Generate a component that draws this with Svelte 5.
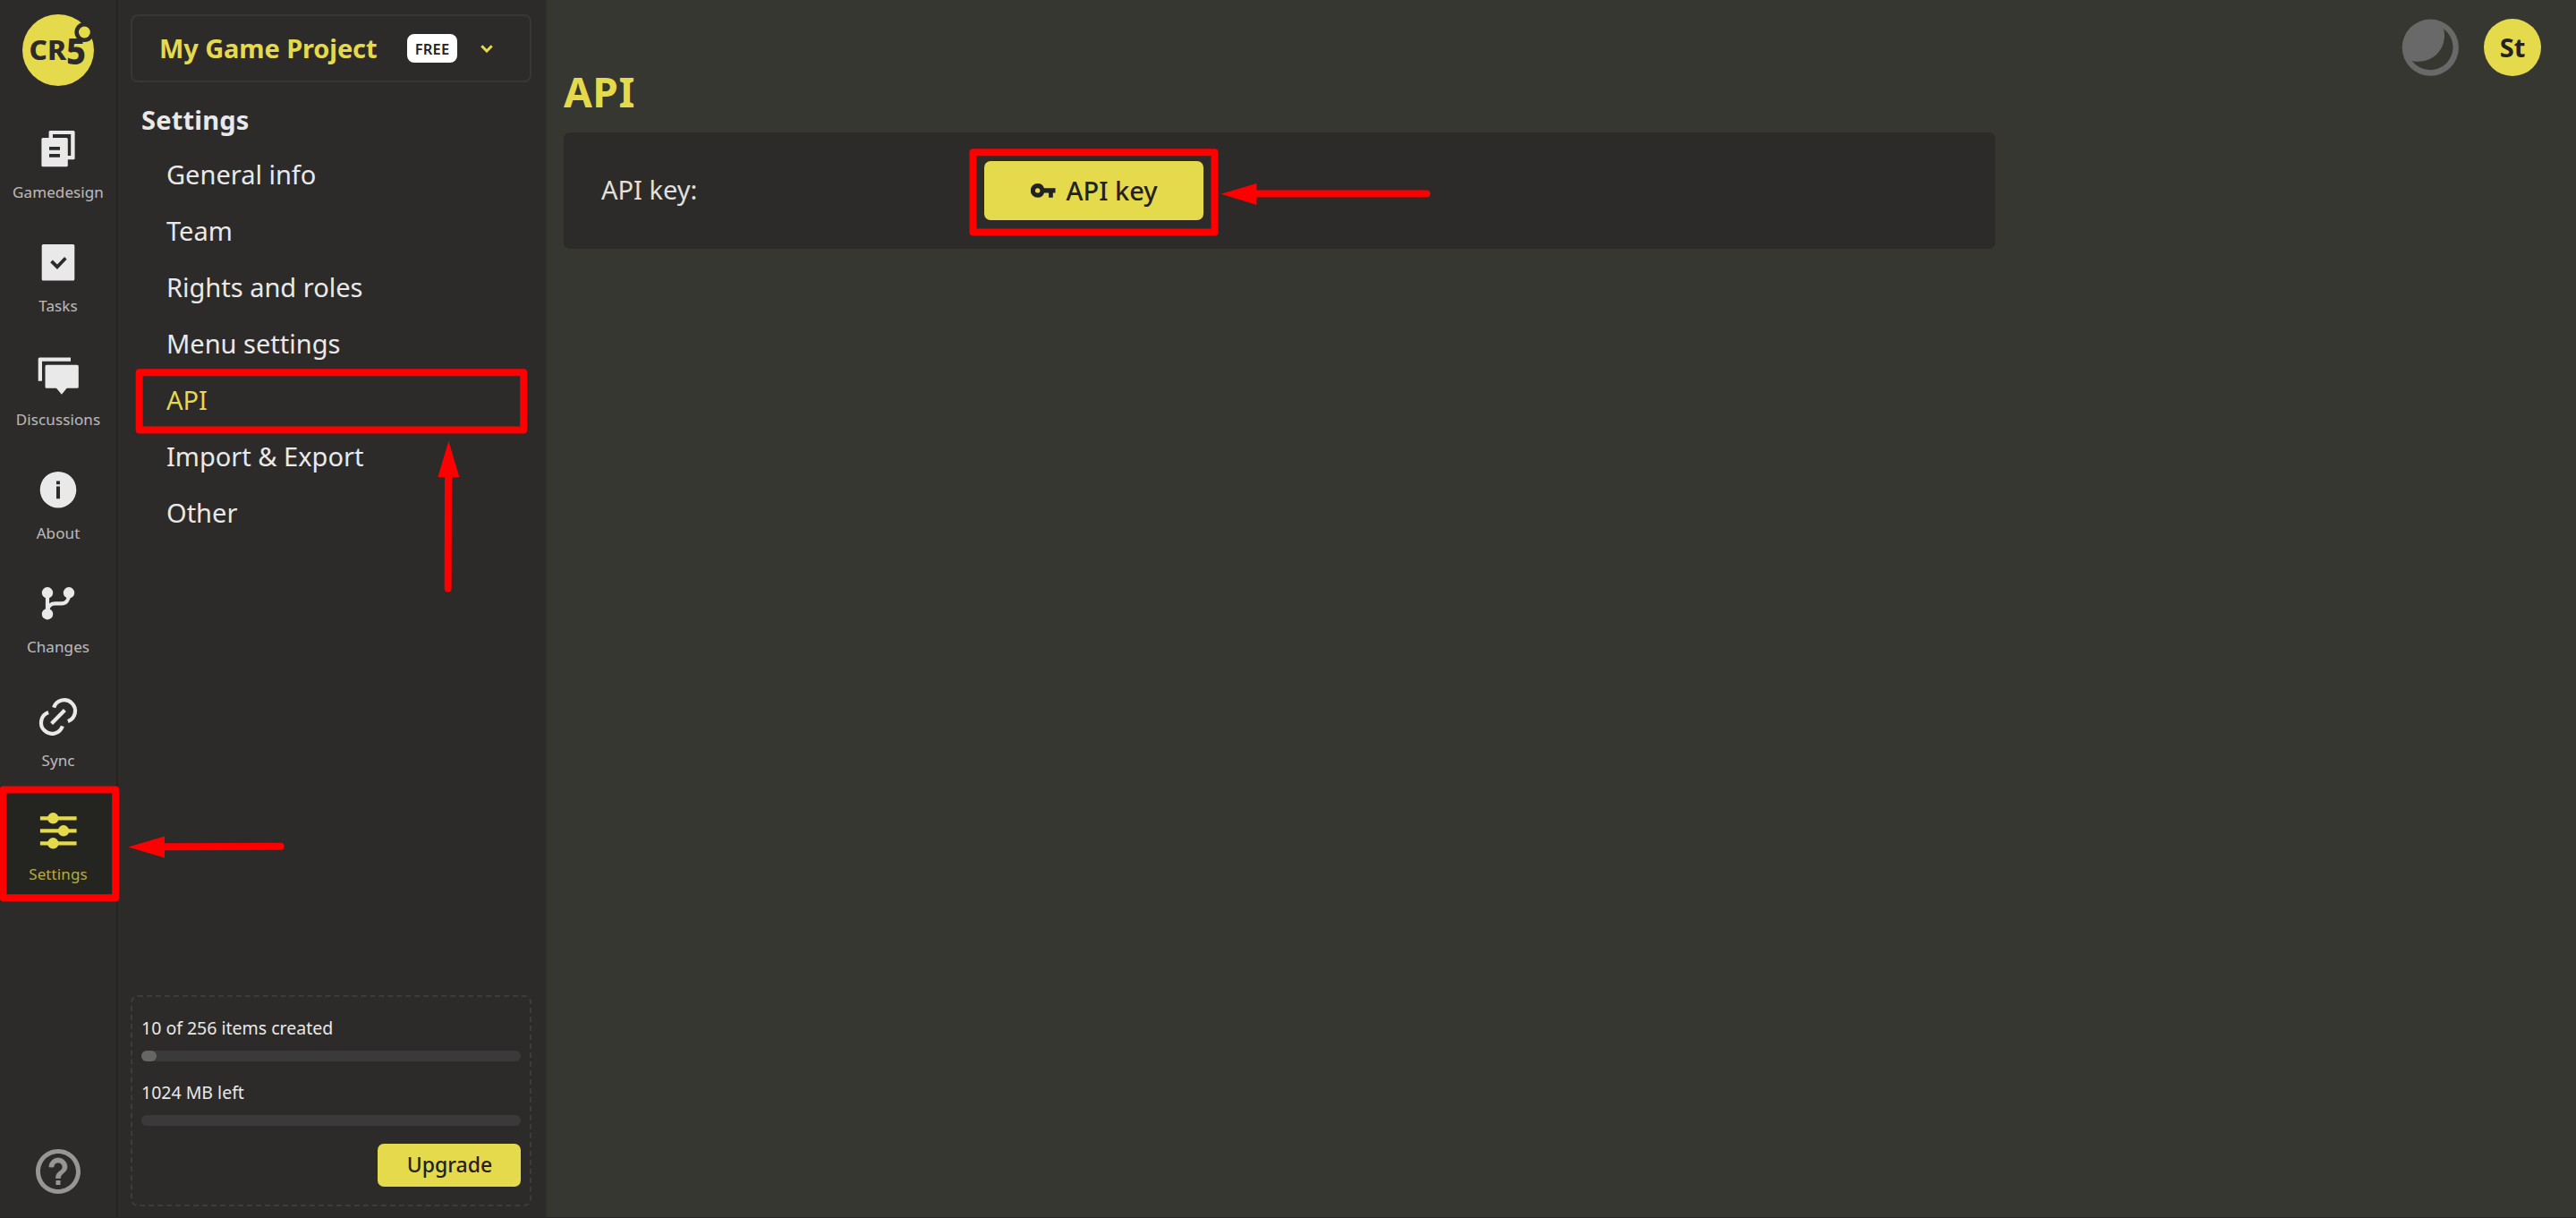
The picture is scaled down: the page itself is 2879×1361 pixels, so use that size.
<script>
    // Rail sections, the icon is picked by name in the markup
    const sections = ['Gamedesign', 'Tasks', 'Discussions', 'About', 'Changes', 'Sync', 'Settings'];
    const menu = ['General info', 'Team', 'Rights and roles', 'Menu settings', 'API', 'Import & Export', 'Other'];

    // Quota bars
    const quotas = [
        { text: '10 of 256 items created', percent: 4 },
        { text: '1024 MB left', percent: 0 },
    ];

    let section = $state('Settings');
    let page = $state('API');
</script>

<div class="app">
    <nav class="rail">
        <svg class="logo" viewBox="0 0 80 80">
            <circle cx="40" cy="40" r="40" fill="#e5d94c" />
            <g fill="#2d2b2a" font-family="Noto Sans, sans-serif" font-weight="800">
                <text x="7.500" y="51.300" font-size="30.500" textLength="41.500" lengthAdjust="spacingAndGlyphs">CR</text>
                <text x="49" y="55.600" font-size="41" textLength="22" lengthAdjust="spacingAndGlyphs">5</text>
            </g>
            <circle cx="69.400" cy="20" r="11" fill="#2d2b2a" />
            <circle cx="69.400" cy="20" r="6.400" fill="#e5d94c" />
        </svg>

        {#each sections as name}
            <button class="rail-item" class:active={section === name} onclick={() => (section = name)}>
                <svg class="rail-icon" viewBox="0 0 48 48" fill="currentColor">
                    {#if name === 'Gamedesign'}
                        <path fill-rule="evenodd" d="M14.9 4h26.2q1.5 0 1.5 1.5v29.3q0 1.5-1.5 1.5H34.8V32H38.2V8H18v4h-4.4V5.5q0-1.5 1.3-1.5zM7 12h26.2q1.6 0 1.6 1.5v29.3q0 1.5-1.5 1.5H6.9q-1.5 0-1.5-1.5V13.5q0-1.5 1.6-1.5zM14 22v3.8h12V22zM14 30v3.8h12V30z" />
                    {:else if name === 'Tasks'}
                        <path fill-rule="evenodd" d="M7.2 4h33.6q1.500 0 1.500 1.500v37.600q0 1.500-1.500 1.500H7.200q-1.500 0-1.500-1.500V5.500Q5.700 4 7.200 4zM15.200 24.300L23 31.900 33.600 20.700 31.100 18 23 26.400 17.900 21.600z" />
                    {:else if name === 'Discussions'}
                        <path d="M3.2 3.4H38v4.3H6v22H1.7V4.9q0-1.5 1.5-1.5zM11 11.8h34.3q1.5 0 1.5 1.5v23q0 1.5-1.5 1.5H33.7L27.9 44.7 22 37.8H11q-1.5 0-1.5-1.5v-23q0-1.5 1.5-1.5z" />
                    {:else if name === 'About'}
                        <path fill-rule="evenodd" d="M24 3.9a20.3 20.3 0 1 0 0 40.6a20.3 20.3 0 1 0 0-40.6zM22 14.6h4v3.7h-4zM22 20.6h4v13.6h-4z" />
                    {:else if name === 'Changes'}
                        <circle cx="12" cy="12.3" r="6.2" />
                        <circle cx="36" cy="12.3" r="6.2" />
                        <circle cx="12" cy="36.2" r="6.2" />
                        <path fill="none" stroke="currentColor" stroke-width="4.2" d="M12 13V36M36 14C36 20 33 24.4 28 24.4H21C16 24.4 12.5 27 12.5 32" />
                    {:else if name === 'Sync'}
                        <path fill="none" stroke="currentColor" stroke-width="4.2" d="M16.6 31.4L31.4 16.6M19.2 13.7A12.2 12.2 0 1 1 34.9 28.9M13.1 19.1A12.2 12.2 0 1 0 28.8 34.3" />
                    {:else}
                        <path d="M3.9 8.2h40.7v4.2H3.9zM3.9 22.2h40.7v4.2H3.9zM3.9 36.2h40.7v4.2H3.9z" />
                        <circle cx="18.3" cy="10.3" r="6.2" />
                        <circle cx="30" cy="24.3" r="6.2" />
                        <circle cx="18.3" cy="38.3" r="6.2" />
                    {/if}
                </svg>
                <span>{name}</span>
            </button>
        {/each}

        <svg class="help" viewBox="0 0 24 24" fill="#979696">
            <path d="M11 18h2v-2h-2v2zm1-16C6.48 2 2 6.48 2 12s4.48 10 10 10 10-4.48 10-10S17.52 2 12 2zm0 18c-4.41 0-8-3.59-8-8s3.59-8 8-8 8 3.59 8 8-3.59 8-8 8z" />
            <path stroke="#979696" stroke-width="0.3" d="M12 6c-2.210 0-4 1.790-4 4h2c0-1.100.9-2 2-2s2 .9 2 2c0 2-3 1.750-3 5h2c0-2.250 3-2.500 3-5 0-2.210-1.790-4-4-4z" />
        </svg>
    </nav>

    <aside class="sidebar">
        <button class="project">
            <span class="project-name">My Game Project</span>
            <span class="badge">FREE</span>
            <svg class="chevron" viewBox="0 0 14 9" fill="none" stroke="#e5d94c" stroke-width="3">
                <path d="M1.3 1.3L7 7L12.7 1.3" />
            </svg>
        </button>

        <h2>Settings</h2>
        <ul>
            {#each menu as item}
                <li>
                    <button class:active={page === item} onclick={() => (page = item)}>{item}</button>
                </li>
            {/each}
        </ul>

        <div class="quota">
            {#each quotas as quota}
                <p>{quota.text}</p>
                <div class="bar">
                    <div class="bar-fill" style="width: {quota.percent}%"></div>
                </div>
            {/each}
            <button class="primary upgrade"><span>Upgrade</span></button>
        </div>
    </aside>

    <main>
        <section>
            <h1>API</h1>
            <div class="card">
                <span class="card-label">API key:</span>
                <button class="primary api-key">
                    <svg viewBox="0 0 28 16" fill="#222">
                        <path fill-rule="evenodd" d="M7.7 0a7.8 7.8 0 1 0 0 15.800a7.800 7.800 0 0 0 7.300-5.300h5.100v5.300h4.700v-5.300H27.500V5.300H15A7.800 7.800 0 0 0 7.700 0zM7.700 5.200a2.700 2.700 0 1 1 0 5.400a2.700 2.700 0 1 1 0-5.400z" />
                    </svg>
                    <span>API key</span>
                </button>
            </div>
        </section>

        <div class="user">
            <svg class="theme" viewBox="0 0 64 64">
                <circle cx="32.3" cy="32.2" r="31.6" fill="#696969" />
                <path fill="#363731" d="M47 11.200A29 29 0 0 1 11.700 46.900A25.400 25.400 0 1 0 47 11.200z" />
            </svg>
            <div class="avatar">St</div>
        </div>
    </main>

    <!-- Hint frames and arrows above the page -->
    <svg class="hints" viewBox="0 0 2879 1361">
        <g fill="none" stroke="#f00" stroke-width="8" stroke-linecap="round" stroke-linejoin="round">
            <rect x="3.5" y="882.5" width="125.7" height="120.7" />
            <rect x="155.7" y="416.3" width="429.5" height="64.2" />
            <rect x="1087.5" y="170.3" width="270" height="89.3" />
            <path d="M180 946.2L313.5 945.7M501 530L500.7 657.5M1400 216.5H1594.5" />
        </g>
        <path fill="#f00" d="M143.3 946.5L184 934.5V958.5zM501.4 493L513.4 533H489.4zM1364.5 216.8L1404.5 205V229z" />
    </svg>
</div>

<style>
    :global(body) {
        background: #363731;
        overflow: hidden;
    }

    .app {
        position: relative;
        display: flex;
        box-sizing: border-box;
        height: 1361px;
        border-bottom: 1px solid #282725;
        font-family: "Noto Sans", "Open Sans", sans-serif;
        font-size: 29px;
        color: #e9e9e9;
    }

    button {
        border: none;
        background: none;
        padding: 0;
        font: inherit;
        color: inherit;
        cursor: pointer;
    }

    h1, h2, ul, p {
        margin: 0;
        padding: 0;
        list-style: none;
    }

    .rail {
        display: flex;
        flex-direction: column;
        align-items: center;
        box-sizing: border-box;
        width: 132px;
        padding-top: 16px;
        border-right: 2px solid #242322;
        background: #2d2b2a;
    }

    .logo {
        width: 80px;
        height: 80px;
        margin-bottom: 22px;
        overflow: visible;
    }

    .rail-item {
        display: flex;
        flex-direction: column;
        align-items: center;
        gap: 15px;
        box-sizing: border-box;
        width: 100%;
        height: 127px;
        padding-top: 24px;
    }

    .rail-item span {
        font-size: 17px;
        line-height: 20px;
        letter-spacing: 0.1px;
        opacity: 0.75;
    }

    .rail-item.active {
        background: #242421;
        color: #e5d94c;
    }

    .rail-icon {
        width: 48px;
        height: 48px;
    }

    .help {
        width: 60px;
        height: 60px;
        margin-top: auto;
        margin-bottom: 21px;
    }

    .sidebar {
        display: flex;
        flex-direction: column;
        box-sizing: border-box;
        width: 480px;
        padding: 16px 16px 12px 14px;
        border-right: 2px solid #32322e;
        background: #2d2b2a;
    }

    .project {
        display: flex;
        align-items: center;
        box-sizing: border-box;
        width: 448px;
        height: 76px;
        padding-left: 30px;
        border: 2px solid #383735;
        border-radius: 8px;
        text-align: left;
    }

    .project-name {
        width: 277px;
        padding-bottom: 1px;
        font-weight: 700;
        letter-spacing: -0.1px;
        color: #e5d94c;
    }

    .badge {
        width: 56px;
        border-radius: 8px;
        background: #fff;
        color: #242424;
        font-size: 16.5px;
        font-weight: 600;
        line-height: 33px;
        height: 32px;
        letter-spacing: 0.2px;
        text-align: center;
    }

    .chevron {
        width: 14px;
        height: 9px;
        margin-left: 26px;
    }

    h2 {
        height: 54px;
        margin: 17px 0 0 12px;
        font-size: 29px;
        font-weight: 700;
        line-height: 50px;
        letter-spacing: 0.2px;
    }

    li button {
        width: 100%;
        padding-left: 40px;
        line-height: 63px;
        text-align: left;
    }

    li button.active {
        color: #e5d94c;
    }

    .quota {
        display: flex;
        flex-direction: column;
        box-sizing: border-box;
        width: 448px;
        height: 236px;
        margin-top: auto;
        padding: 0 10px;
        border: 2px dashed #3d3c3b;
        border-radius: 8px;
    }

    .quota p {
        margin: 23px 0 13px;
        font-size: 19.5px;
        line-height: 24px;
    }

    .bar {
        height: 12px;
        border-radius: 6px;
        background: #3a3a3a;
    }

    .bar-fill {
        height: 12px;
        border-radius: 6px;
        background: #666664;
    }

    .primary {
        border-radius: 7px;
        background: #e5d94c;
        color: #222;
        font-weight: 500;
    }

    .upgrade {
        width: 160px;
        height: 48px;
        margin: 20px 0 0 auto;
        padding: 0 0 2px 1px;
        font-size: 23px;
    }

    main {
        display: flex;
        flex: 1;
        justify-content: space-between;
        padding: 0 39px 0 18px;
        background: #363731;
    }

    section {
        width: 1600px;
        padding-top: 72px;
    }

    h1 {
        margin-bottom: 16px;
        font-size: 46px;
        line-height: 60px;
        letter-spacing: 0.5px;
        color: #e5d94c;
    }

    .card {
        display: grid;
        grid-template-columns: 428px auto;
        justify-content: start;
        align-items: center;
        height: 130px;
        padding-left: 42px;
        border-radius: 7px;
        background: #2d2b29;
    }

    .card-label {
        padding-bottom: 3px;
        color: #e0e0df;
    }

    .api-key {
        display: flex;
        align-items: center;
        justify-content: center;
        gap: 11px;
        width: 245px;
        height: 66px;
        padding-left: 1px;
    }

    .api-key svg {
        width: 28px;
        height: 16px;
    }

    .api-key span {
        padding-bottom: 2px;
    }

    .user {
        display: flex;
        gap: 28px;
        padding-top: 21px;
    }

    .theme {
        width: 64px;
        height: 64px;
    }

    .avatar {
        width: 64px;
        height: 64px;
        border-radius: 50%;
        background: #e5d94c;
        color: #222;
        font-weight: 700;
        line-height: 63px;
        text-align: center;
    }

    .hints {
        position: absolute;
        top: 0;
        left: 0;
        width: 2879px;
        height: 1361px;
        pointer-events: none;
    }
</style>
